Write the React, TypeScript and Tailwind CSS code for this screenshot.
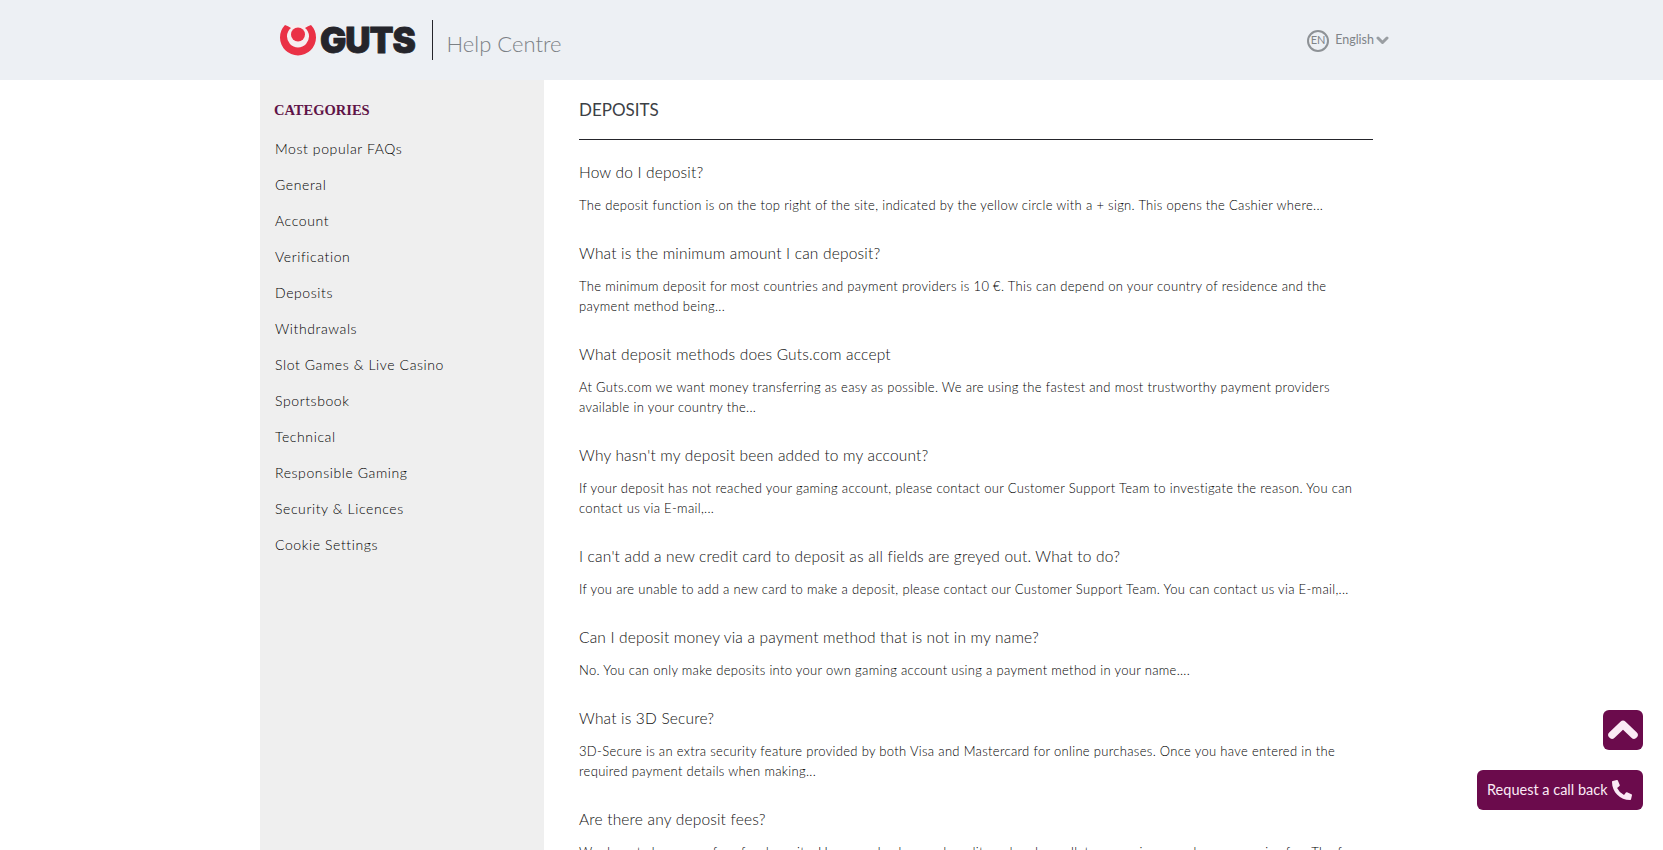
import { FaPhoneAlt } from "react-icons/fa";

const cats = ["Most popular FAQs","General","Account","Verification","Deposits","Withdrawals","Slot Games & Live Casino","Sportsbook","Technical","Responsible Gaming","Security & Licences","Cookie Settings"];
const faqs: [string, string][] = [
  ["How do I deposit?","The deposit function is on the top right of the site, indicated by the yellow circle with a + sign. This opens the Cashier where..."],
  ["What is the minimum amount I can deposit?","The minimum deposit for most countries and payment providers is 10 €. This can depend on your country of residence and the payment method being..."],
  ["What deposit methods does Guts.com accept","At Guts.com we want money transferring as easy as possible. We are using the fastest and most trustworthy payment providers available in your country the..."],
  ["Why hasn't my deposit been added to my account?","If your deposit has not reached your gaming account, please contact our Customer Support Team to investigate the reason. You can contact us via E-mail,..."],
  ["I can't add a new credit card to deposit as all fields are greyed out. What to do?","If you are unable to add a new card to make a deposit, please contact our Customer Support Team. You can contact us via E-mail,..."],
  ["Can I deposit money via a payment method that is not in my name?","No. You can only make deposits into your own gaming account using a payment method in your name...."],
  ["What is 3D Secure?","3D-Secure is an extra security feature provided by both Visa and Mastercard for online purchases. Once you have entered in the required payment details when making..."],
  ["Are there any deposit fees?","We do not charge any fees for deposits. However, background credit card and e-wallet companies may charge a service fee. The fee..."],
];

export default function App() {
  return (
    <div className="h-[850px] overflow-hidden bg-white font-['Lato',sans-serif] text-[#333]">
      <header className="h-20 bg-[#edf0f4]">
        <div className="mx-auto flex h-full w-[1143px] items-center pl-[20px] pr-[14px]">
          <svg width="36" height="31" viewBox="0 0 36 31" className="shrink-0">
            <circle cx="18" cy="11" r="13" fill="#f6eef0" />
            <path d="M5 0 Q8 1 11 3 A11 11 0 1 0 25 3 Q28 1 31 0 A18 18 0 1 1 5 0Z" fill="#ea3146" />
            <circle cx="18" cy="9.5" r="7" fill="#ea3146" />
          </svg>
          <span className="ml-[4px] font-['Inter',sans-serif] text-[35px] leading-none font-black tracking-[-1.1px] text-[#25252b] [-webkit-text-stroke:0.8px_#25252b]">GUTS</span>
          <div className="ml-[17px] h-10 w-px bg-[#25252b]" />
          <span className="ml-[14px] mt-[6px] text-[22px] font-light text-[#7b8085]">Help Centre</span>
          <div className="ml-auto mt-[1px] flex items-center text-[#7f8488]">
            <span className="flex h-[22px] w-[22px] items-center justify-center rounded-full border-2 border-[#8e9296] text-[11px]">EN</span>
            <span className="ml-[6px] text-[12.5px]">English</span>
            <svg width="13" height="9" viewBox="0 0 13 9" className="ml-[2px] text-[#9a9ea2]">
              <path d="M2 2 L6.5 6.5 L11 2" fill="none" stroke="currentColor" strokeWidth="3" strokeLinecap="round" strokeLinejoin="round" />
            </svg>
          </div>
        </div>
      </header>
      <div className="mx-auto flex w-[1143px]">
        <aside className="h-[770px] w-[284px] shrink-0 bg-[#efefef] pt-[21px]">
          <h2 className="pl-[14px] font-['Liberation_Serif',serif] text-[14.5px] leading-[18px] font-bold text-[#5f1447]">CATEGORIES</h2>
          <ul className="mt-[12px] pl-[15px]">
            {cats.map((c) => (
              <li key={c} className="h-9 text-[14px] leading-9 font-light tracking-[0.6px] text-black">{c}</li>
            ))}
          </ul>
        </aside>
        <main className="ml-[35px] w-[794px]">
          <h1 className="mt-[19px] h-[40px] text-[17px] leading-[22px] font-normal text-[#3c4045]">DEPOSITS</h1>
          <div className="h-px bg-[#25252b]" />
          <div className="pt-[22px]">
            {faqs.map(([q, a]) => (
              <article key={q} className="mb-[28px]">
                <h3 className="text-[15.5px] leading-[20px] font-light tracking-[0.18px] text-[#111]">{q}</h3>
                <p className="mt-[13px] text-[13px] leading-[20px] font-light tracking-[0.32px] text-black">{a}</p>
              </article>
            ))}
          </div>
        </main>
      </div>
      <button className="fixed left-[1603px] top-[710px] flex h-10 w-10 items-center justify-center rounded-md bg-[#6b0b4c] text-[#fbeaf5]">
        <svg width="32" height="24" viewBox="0 0 32 24">
          <path d="M5 17 L16 6.5 L27 17" fill="none" stroke="currentColor" strokeWidth="7.5" strokeLinecap="round" strokeLinejoin="round" />
        </svg>
      </button>
      <button className="fixed left-[1477px] top-[770px] flex h-10 w-[166px] items-center rounded-md bg-[#6b0b4c] pl-[10px] text-[14.5px] text-[#fbeaf5]">
        Request a call back
        <FaPhoneAlt size={20} className="ml-[4px]" />
      </button>
    </div>
  );
}
